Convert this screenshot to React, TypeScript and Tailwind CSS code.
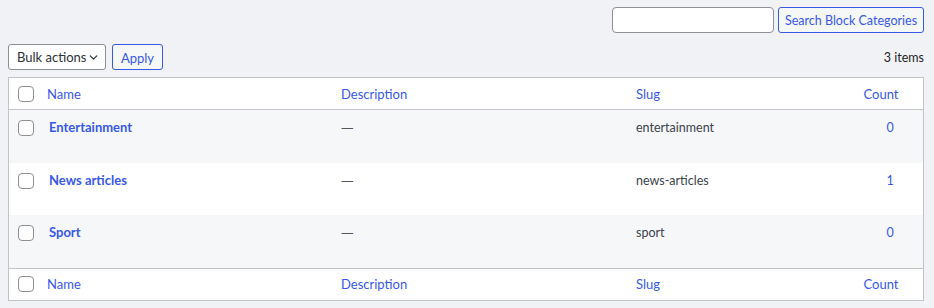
import { ChevronDown } from "lucide-react";

const rows = [
  { name: "Entertainment", slug: "entertainment", count: "0" },
  { name: "News articles", slug: "news-articles", count: "1" },
  { name: "Sport", slug: "sport", count: "0" },
];

const cols = "grid grid-cols-[28px_294px_295px_1fr_66px]";

const Box = () => (
  <span className="block w-4 h-4 rounded-[4px] border border-[#8c8f94] bg-white" />
);

const HeadRow = ({ top }: { top?: boolean }) => (
  <div
    className={`${cols} h-[32px] items-center bg-white text-[13px] text-[#3858e9] ${
      top ? "border-b" : "border-t"
    } border-[#c3c4c7]`}
  >
    <div className="pl-[9px]">
      <Box />
    </div>
    <div className="pl-[10px] pt-[2px]">Name</div>
    <div className="pl-[10px] pt-[2px]">Description</div>
    <div className="pl-[10px] pt-[2px]">Slug</div>
    <div className="text-center pr-[18px] pt-[2px]">Count</div>
  </div>
);

export default function App() {
  return (
    <div className="min-h-[308px] w-[934px] bg-[#f1f2f5] px-[8px] pt-[7px] font-['Lato',sans-serif] text-[12.5px] text-[#3c434a]">
      <div className="flex justify-end gap-[4px] pr-[2px]">
        <input className="w-[162px] h-[26px] rounded-[4px] border border-[#8c8f94] bg-white" />
        <button className="w-[146px] h-[26px] pt-[2px] rounded-[3px] border border-[#3858e9] bg-[#f6f7f7] text-[#3858e9] text-[12.5px] leading-none whitespace-nowrap">
          Search Block Categories
        </button>
      </div>

      <div className="flex items-center mt-[11px] h-[26px]">
        <div className="flex items-center h-[26px] w-[98px] rounded-[3px] border border-[#8c8f94] bg-white pl-[8px] pr-[5px] text-[13px] text-[#2c3338] whitespace-nowrap">
          <span className="flex-1 pt-[1px]">Bulk actions</span>
          <ChevronDown className="w-[13px] h-[13px]" strokeWidth={2.2} />
        </div>
        <button className="ml-[6px] h-[26px] w-[51px] pt-[2px] rounded-[3px] border border-[#3858e9] bg-[#f6f7f7] text-[13px] text-[#3858e9] leading-none">
          Apply
        </button>
        <span className="ml-auto pr-[2px] pt-[2px] text-[#1d2327]">3 items</span>
      </div>

      <div className="mt-[7px] mr-[2px] border border-[#c3c4c7] bg-white">
        <HeadRow top />
        {rows.map((r, i) => (
          <div
            key={r.slug}
            className={`${cols} h-[52.5px] items-start ${i % 2 === 0 ? "bg-[#f6f7f9]" : "bg-white"}`}
          >
            <div className="pl-[9px] pt-[10px]">
              <Box />
            </div>
            <div className="pl-[12px] pt-[8px] text-[13px] leading-[19px] font-bold text-[#3858e9]">
              {r.name}
            </div>
            <div className="pl-[10px] pt-[8px] leading-[19px] font-['Noto_Sans',sans-serif] text-[#50575e]">—</div>
            <div className="pl-[10px] pt-[8px] leading-[19px]">{r.slug}</div>
            <div className="pt-[8px] leading-[19px] text-center text-[#3858e9]">{r.count}</div>
          </div>
        ))}
        <HeadRow />
      </div>
    </div>
  );
}
